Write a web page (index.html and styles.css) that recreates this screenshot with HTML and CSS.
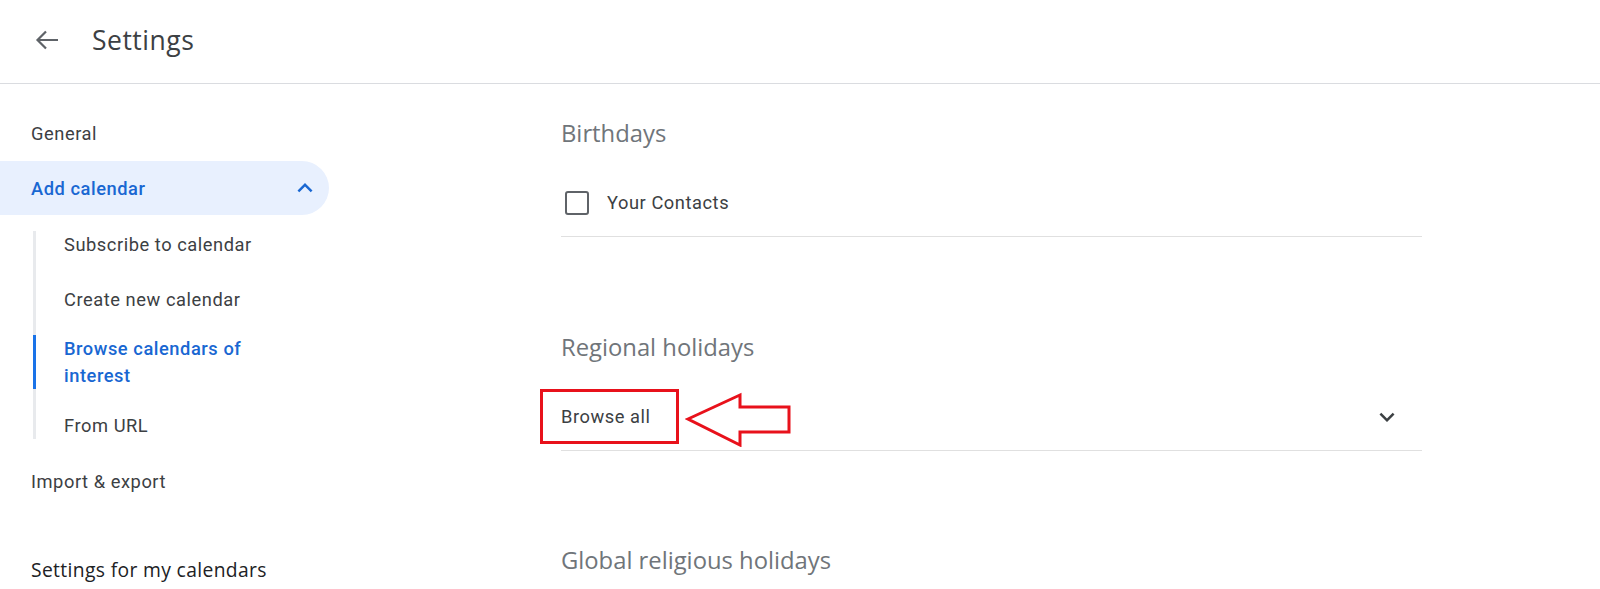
FILE: index.html
```html
<!DOCTYPE html>
<html lang="en">
<head>
<meta charset="utf-8">
<title>Settings</title>
<link rel="stylesheet" href="styles.css">
</head>
<body>
<header class="topbar">
  <button class="back" aria-label="Back">
    <svg width="24" height="20" viewBox="0 0 24 20"><path d="M23 10H2.5M11 1.5L2.5 10 11 18.5" fill="none" stroke="#5f6368" stroke-width="2.2"/></svg>
  </button>
  <h1 class="title">Settings</h1>
</header>
<div class="page">
  <nav class="sidebar">
    <div class="nav-item">General</div>
    <div class="nav-item nav-open">
      <span>Add calendar</span>
      <svg class="chev" width="30" height="30" viewBox="0 0 24 24"><path d="M12 8l-6 6 1.41 1.41L12 10.83l4.59 4.58L18 14z" fill="#1967d2"/></svg>
    </div>
    <ul class="subnav">
      <li class="sub">Subscribe to calendar</li>
      <li class="sub sub-create">Create new calendar</li>
      <li class="sub sub-active">Browse calendars of interest</li>
      <li class="sub">From URL</li>
    </ul>
    <div class="nav-item nav-import">Import &amp; export</div>
    <div class="nav-head">Settings for my calendars</div>
  </nav>
  <main class="content">
    <section class="section first">
      <h2 class="sec-title">Birthdays</h2>
      <div class="row">
        <span class="checkbox"></span>
        <span class="row-label">Your Contacts</span>
      </div>
    </section>
    <section class="section second">
      <h2 class="sec-title">Regional holidays</h2>
      <div class="row row-select">
        <span class="row-text">Browse all</span>
        <svg class="chev-down" width="30" height="30" viewBox="0 0 24 24"><path d="M16.59 8.59L12 13.17 7.41 8.59 6 10l6 6 6-6z" fill="#3c4043"/></svg>
        <span class="mark-box"></span>
        <svg class="mark-arrow" width="106" height="56" viewBox="0 0 106 56"><polygon points="3,28 55,4 55,16 104,16 104,41 55,41 55,54" fill="#fff" stroke="#e8111b" stroke-width="3" stroke-linejoin="miter"/></svg>
      </div>
    </section>
    <section class="section">
      <h2 class="sec-title">Global religious holidays</h2>
    </section>
  </main>
</div>
</body>
</html>
```
FILE: styles.css
```css
* { box-sizing: border-box; }
html, body { margin: 0; padding: 0; background: #fff; }
body {
  font-family: Roboto, "Liberation Sans", sans-serif;
  color: #3c4043;
  width: 1600px;
  height: 589px;
  overflow: hidden;
}
.topbar {
  height: 84px;
  border-bottom: 1px solid #dadce0;
  display: flex;
  align-items: center;
  padding-bottom: 3px;
}
.back {
  border: 0;
  background: none;
  padding: 0;
  margin-left: 35px;
  width: 24px;
  height: 20px;
  display: flex;
}
.title {
  margin: 0 0 0 33px;
  font-family: "Open Sans", sans-serif;
  font-weight: 400;
  font-size: 26.5px;
  color: #3c4043;
  letter-spacing: 0.5px;
}
.page {
  display: flex;
}
.sidebar {
  width: 329px;
  padding-top: 22px;
  flex: none;
}
.nav-item {
  height: 54px;
  display: flex;
  align-items: center;
  padding-left: 31px;
  padding-top: 1px;
  font-size: 18.3px;
  letter-spacing: 0.55px;
  color: #3c4043;
}
.nav-open {
  margin-top: 1px;
  background: #e8f0fe;
  border-radius: 0 27px 27px 0;
  color: #1967d2;
  font-weight: 500;
  justify-content: space-between;
  padding-right: 9px;
}
.chev { margin-top: -2px; }
.subnav {
  list-style: none;
  margin: 16px 0 0 33px;
  padding: 0;
  width: 250px;
  border-left: 3px solid #e8eaed;
  display: flex;
  flex-direction: column;
  gap: 23px;
}
.sub {
  font-size: 18.3px;
  letter-spacing: 0.55px;
  line-height: 27px;
  padding-left: 28px;
  color: #3c4043;
}
.sub-create { margin-top: 5px; margin-bottom: -1px; }
.sub-active {
  color: #1967d2;
  font-weight: 500;
  margin-left: -3px;
  border-left: 3px solid #1a73e8;
}
.nav-import { margin-top: 15px; }
.nav-head {
  margin-top: 34px;
  height: 54px;
  display: flex;
  align-items: center;
  padding-left: 31px;
  font-family: "Open Sans", sans-serif;
  font-size: 19.3px;
  letter-spacing: 0.35px;
  font-weight: 500;
  color: #202124;
}
.content {
  margin-left: 232px;
  width: 861px;
  flex: none;
}
.section { padding-top: 93px; }
.section.first { padding-top: 33px; }
.section.second { padding-top: 94px; }
.sec-title {
  margin: 0;
  height: 32px;
  line-height: 32px;
  font-family: "Open Sans", sans-serif;
  font-weight: 400;
  font-size: 23.8px;
  color: #70757a;
}
.row {
  margin-top: 21px;
  height: 67px;
  border-bottom: 1px solid #e0e0e0;
  display: flex;
  align-items: center;
  padding-bottom: 1px;
}
.checkbox {
  width: 24px;
  height: 24px;
  border: 2.5px solid #5f6368;
  border-radius: 3px;
  margin-left: 4px;
  margin-right: 18px;
}
.row-label, .row-text {
  font-size: 18.3px;
  letter-spacing: 0.55px;
  color: #3c4043;
}
.row-select {
  position: relative;
  justify-content: space-between;
  padding-right: 20px;
}
.mark-box {
  position: absolute;
  left: -21px;
  top: 5px;
  width: 139px;
  height: 55px;
  border: 3px solid #e8111b;
}
.mark-arrow {
  position: absolute;
  left: 124px;
  top: 7px;
}
```
